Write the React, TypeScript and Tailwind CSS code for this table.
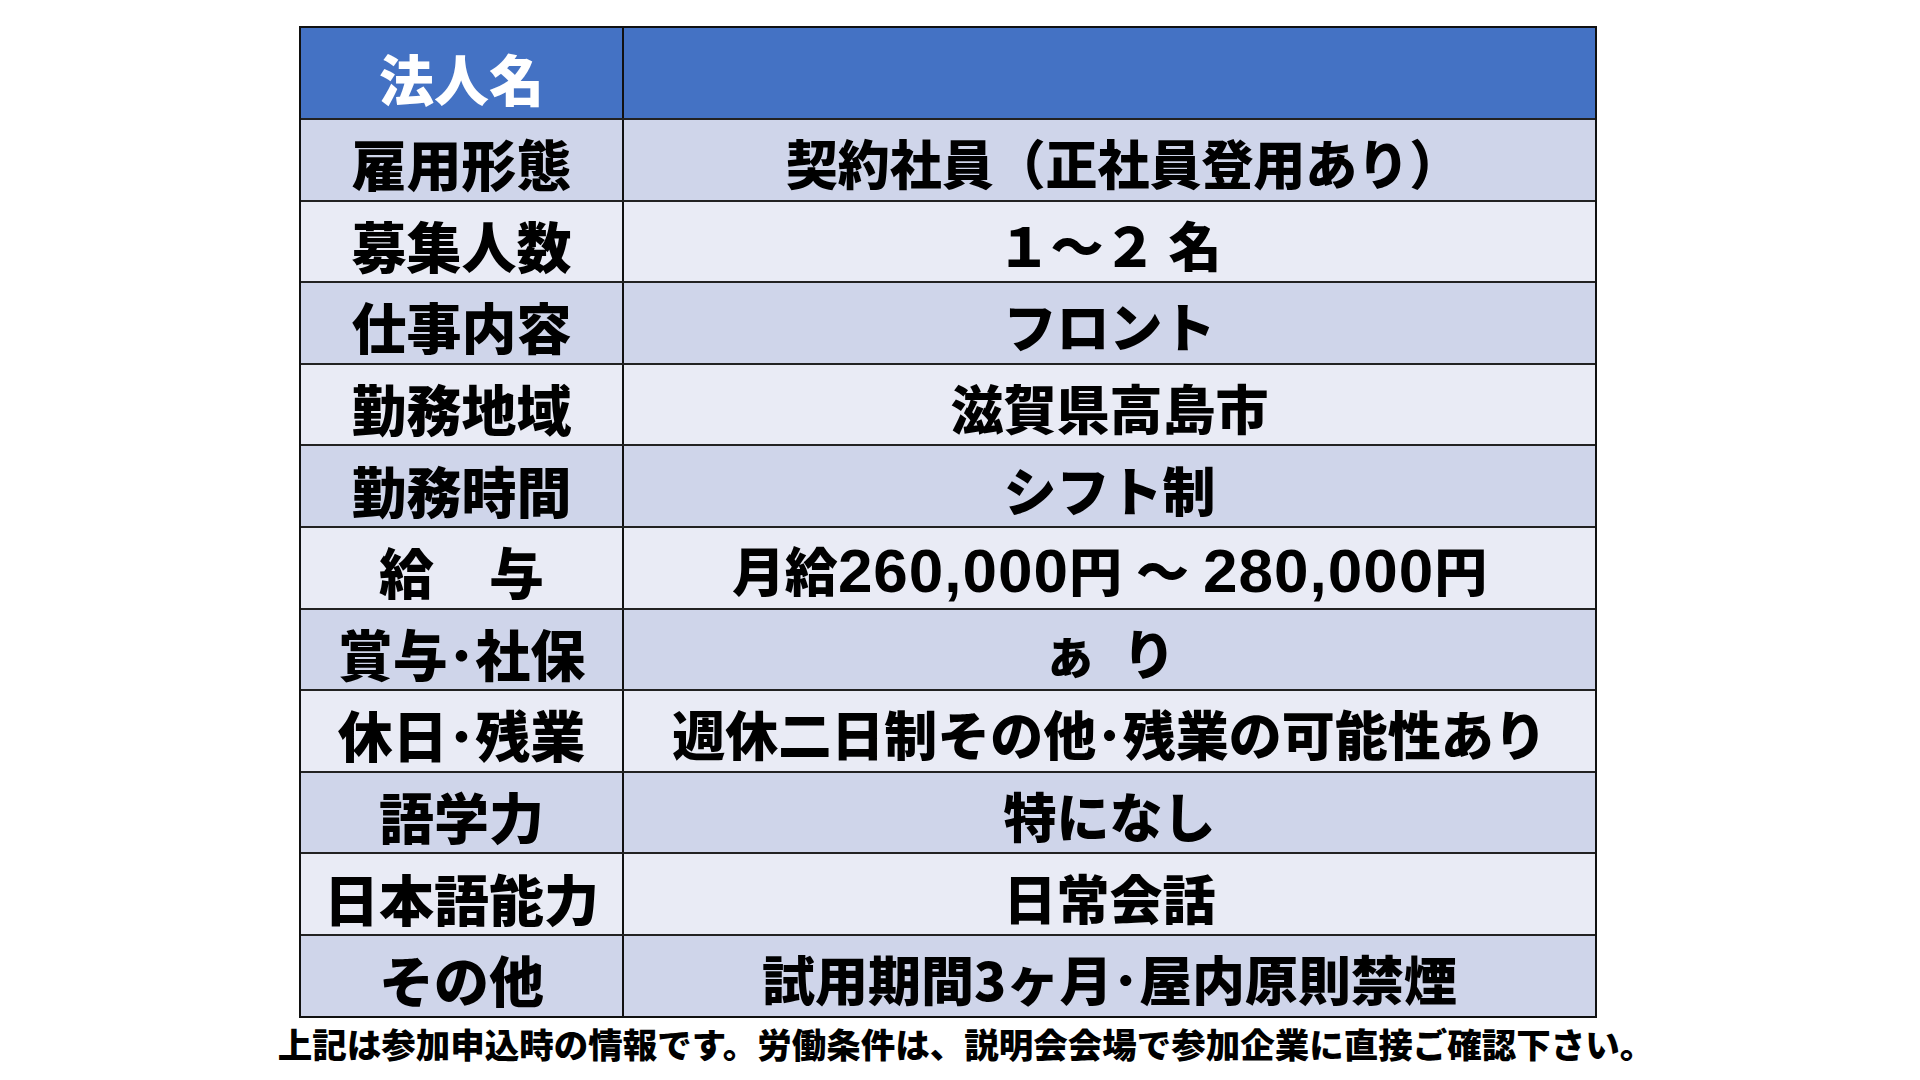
import React from "react";

const num = "text-[62px] font-bold tracking-[1px] [font-family:'Liberation_Sans',sans-serif]";

const rows: { label: React.ReactNode; value: React.ReactNode }[] = [
  { label: "雇用形態", value: <span className="inline-block ml-[27px] scale-x-[0.98]">契約社員（正社員登用あり）</span> },
  { label: "募集人数", value: "１～２ 名" },
  { label: "仕事内容", value: "フロント" },
  { label: "勤務地域", value: "滋賀県高島市" },
  { label: "勤務時間", value: "シフト制" },
  {
    label: "給　与",
    value: (
      <span className="flex items-baseline">
        <span>月給</span>
        <span className={num}>260,000</span>
        <span>円</span>
        <span className="mx-[14px]">～</span>
        <span className={num}>280,000</span>
        <span>円</span>
      </span>
    ),
  },
  {
    label: "賞与･社保",
    value: (
      <span className="flex">
        <span>ぁ</span>
        <span className="ml-[26px]">り</span>
      </span>
    ),
  },
  { label: "休日･残業", value: "週休二日制その他･残業の可能性あり" },
  { label: "語学力", value: "特になし" },
  { label: "日本語能力", value: "日常会話" },
  { label: "その他", value: "試用期間3ヶ月･屋内原則禁煙" },
];

export default function App() {
  return (
    <div className="w-[1920px] h-[1080px] bg-white flex flex-col [font-family:'Noto_Sans_CJK_JP',sans-serif] text-black">
      <div className="mt-[26px] ml-[299px] w-[1298px] border-2 border-[#111] flex flex-col">
        <div className="flex h-[90px] bg-[#4472C4]">
          <div className="w-[323px] border-r-2 border-[#111] flex items-center justify-center pt-[8px] text-[55px] font-black leading-none text-white">
            法人名
          </div>
          <div className="flex-1" />
        </div>
        {rows.map((r, i) => (
          <div
            key={i}
            className={`flex h-[81.6px] border-t-2 border-[#222] ${i % 2 === 0 ? "bg-[#CFD5EA]" : "bg-[#E9EBF5]"}`}
          >
            <div className="w-[323px] border-r-2 border-[#111] flex items-center justify-center pt-[6px] text-[55px] font-black leading-none whitespace-nowrap">
              {r.label}
            </div>
            <div className="flex-1 flex items-center justify-center pt-[6px] text-[53px] font-black leading-none whitespace-nowrap">
              {r.value}
            </div>
          </div>
        ))}
      </div>
      <div className="mt-[8px] ml-[12px] self-center text-[34.5px] font-black leading-none whitespace-nowrap">
        上記は参加申込時の情報です。労働条件は、説明会会場で参加企業に直接ご確認下さい。
      </div>
    </div>
  );
}
